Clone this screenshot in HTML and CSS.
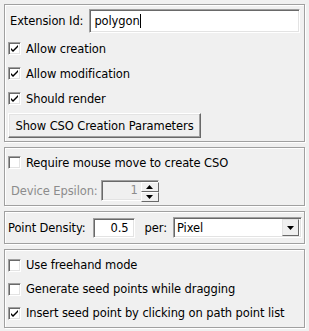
FILE: index.html
```html
<!DOCTYPE html>
<html lang="en">
<head>
    <meta charset="UTF-8">
    <title>CSO Editor Settings</title>
    <link rel="stylesheet" href="styles.css">
</head>
<body>

    <div class="group group-main">
        <div class="row row-ext">
            <span class="label">Extension Id:</span>
            <div class="field field-ext">polygon<span class="caret"></span></div>
        </div>
        <div class="row row-check">
            <span class="box"><svg width="9" height="9" viewBox="0 0 9 9"><path d="M1 4 L3 6 L8 1 L8 3 L3 8 L1 6 Z" fill="#000"/></svg></span>
            <span>Allow creation</span>
        </div>
        <div class="row row-check">
            <span class="box"><svg width="9" height="9" viewBox="0 0 9 9"><path d="M1 4 L3 6 L8 1 L8 3 L3 8 L1 6 Z" fill="#000"/></svg></span>
            <span>Allow modification</span>
        </div>
        <div class="row row-check">
            <span class="box"><svg width="9" height="9" viewBox="0 0 9 9"><path d="M1 4 L3 6 L8 1 L8 3 L3 8 L1 6 Z" fill="#000"/></svg></span>
            <span>Should render</span>
        </div>
        <div class="row row-button">
            <button class="btn">Show CSO Creation Parameters</button>
        </div>
    </div>

    <div class="group group-mouse">
        <div class="row row-check row-first">
            <span class="box"></span>
            <span>Require mouse move to create CSO</span>
        </div>
        <div class="row row-spin">
            <span class="label disabled">Device Epsilon:</span>
            <div class="spin">
                <div class="field field-spin">1</div>
                <div class="spin-buttons">
                    <span class="spin-btn"><svg width="7" height="4" viewBox="0 0 7 4"><path d="M0 4 L3.5 0 L7 4 Z" fill="#000"/></svg></span>
                    <span class="spin-btn"><svg width="7" height="4" viewBox="0 0 7 4"><path d="M0 0 L7 0 L3.5 4 Z" fill="#000"/></svg></span>
                </div>
            </div>
        </div>
    </div>

    <div class="group group-density">
        <div class="row row-density">
            <span class="label">Point Density:</span>
            <div class="field field-density">0.5</div>
            <span class="label label-per">per:</span>
            <div class="combo">
                <span class="combo-text">Pixel</span>
                <span class="combo-btn"><svg width="7" height="4" viewBox="0 0 7 4"><path d="M0 0 L7 0 L3.5 4 Z" fill="#000"/></svg></span>
            </div>
        </div>
    </div>

    <div class="group group-seed">
        <div class="row row-check row-seed">
            <span class="box"></span>
            <span>Use freehand mode</span>
        </div>
        <div class="row row-check row-seed">
            <span class="box"></span>
            <span>Generate seed points while dragging</span>
        </div>
        <div class="row row-check row-seed">
            <span class="box"><svg width="9" height="9" viewBox="0 0 9 9"><path d="M1 4 L3 6 L8 1 L8 3 L3 8 L1 6 Z" fill="#000"/></svg></span>
            <span>Insert seed point by clicking on path point list</span>
        </div>
    </div>

</body>
</html>
```

FILE: styles.css
```css
body {
    margin: 0;
    padding: 4px;
    background-color: #f0f0f0;
    font-family: 'DejaVu Sans', sans-serif;
    font-size: 11.5px;
    letter-spacing: -0.1px;
    color: #000000;
    display: flex;
    flex-direction: column;
    gap: 5px;
}

.group {
    border: 1px solid #a0a0a0;
    box-shadow: 1px 1px 0 #ffffff, inset 1px 1px 0 #ffffff;
    display: flex;
    flex-direction: column;
}

.row {
    display: flex;
    align-items: center;
}

.label {
    white-space: nowrap;
}

.disabled {
    color: #8c8c8c;
}

/* sunken field */
.field {
    background-color: #ffffff;
    border-style: solid;
    border-width: 1px;
    border-color: #a0a0a0 #ffffff #ffffff #a0a0a0;
    box-shadow: inset 1px 1px 0 #696969, inset -1px -1px 0 #e3e3e3;
    box-sizing: border-box;
    display: flex;
    align-items: center;
}

.group-main {
    height: 138px;
    box-sizing: border-box;
}

.row-ext {
    height: 31px;
    padding-left: 5px;
}

.field-ext {
    margin-left: 6px;
    width: 211px;
    height: 24px;
    padding-left: 4px;
}

.caret {
    display: inline-block;
    width: 1px;
    height: 14px;
    background-color: #000000;
}

.row-check {
    height: 25px;
    padding-left: 3px;
}

.box {
    width: 13px;
    height: 13px;
    box-sizing: border-box;
    background-color: #ffffff;
    border-style: solid;
    border-width: 1px;
    border-color: #a0a0a0 #ffffff #ffffff #a0a0a0;
    box-shadow: inset 1px 1px 0 #696969, inset -1px -1px 0 #e3e3e3;
    margin-right: 5px;
    display: flex;
    align-items: center;
    justify-content: center;
}

.row-button {
    padding: 2px 0 0 3px;
}

.btn {
    font-family: inherit;
    font-size: inherit;
    letter-spacing: inherit;
    color: #000000;
    background-color: #f0f0f0;
    height: 25px;
    width: 193px;
    padding: 0;
    border-style: solid;
    border-width: 1px;
    border-color: #ffffff #696969 #696969 #ffffff;
    box-shadow: inset -1px -1px 0 #a0a0a0, inset 1px 1px 0 #e3e3e3;
}

.group-mouse {
    height: 59px;
    box-sizing: border-box;
}

.row-first {
    height: 27px;
    padding-top: 1px;
}

.row-spin {
    height: 29px;
    padding-left: 6px;
}

.spin {
    display: flex;
    margin-left: 3px;
}

.field-spin {
    width: 58px;
    height: 21px;
    justify-content: flex-end;
    padding-right: 20px;
    color: #8c8c8c;
    background-color: #f0f0f0;
}

.spin-buttons {
    margin-left: -18px;
    margin-top: 2px;
    display: flex;
    flex-direction: column;
}

.spin-btn {
    width: 16px;
    height: 8px;
    background-color: #f0f0f0;
    border-style: solid;
    border-width: 1px;
    border-color: #ffffff #696969 #696969 #ffffff;
    display: flex;
    align-items: center;
    justify-content: center;
}

.group-density {
    height: 33px;
    box-sizing: border-box;
    justify-content: center;
}

.row-density {
    padding-left: 3px;
}

.field-density {
    margin-left: 7px;
    width: 42px;
    height: 20px;
    justify-content: flex-end;
    padding-right: 5px;
}

.label-per {
    margin-left: 10px;
}

.combo {
    margin-left: 6px;
    width: 129px;
    height: 21px;
    box-sizing: border-box;
    background-color: #ffffff;
    border-style: solid;
    border-width: 1px;
    border-color: #a0a0a0 #ffffff #ffffff #a0a0a0;
    box-shadow: inset 1px 1px 0 #696969, inset -1px -1px 0 #e3e3e3;
    display: flex;
    align-items: center;
    justify-content: space-between;
    padding: 2px 2px 2px 3px;
}

.combo-btn {
    width: 17px;
    height: 17px;
    box-sizing: border-box;
    background-color: #f0f0f0;
    border-style: solid;
    border-width: 1px;
    border-color: #e3e3e3 #696969 #696969 #e3e3e3;
    display: flex;
    align-items: center;
    justify-content: center;
}

.group-seed {
    height: 79px;
    box-sizing: border-box;
    padding-top: 3px;
}

.row-seed {
    height: 24px;
}
```
